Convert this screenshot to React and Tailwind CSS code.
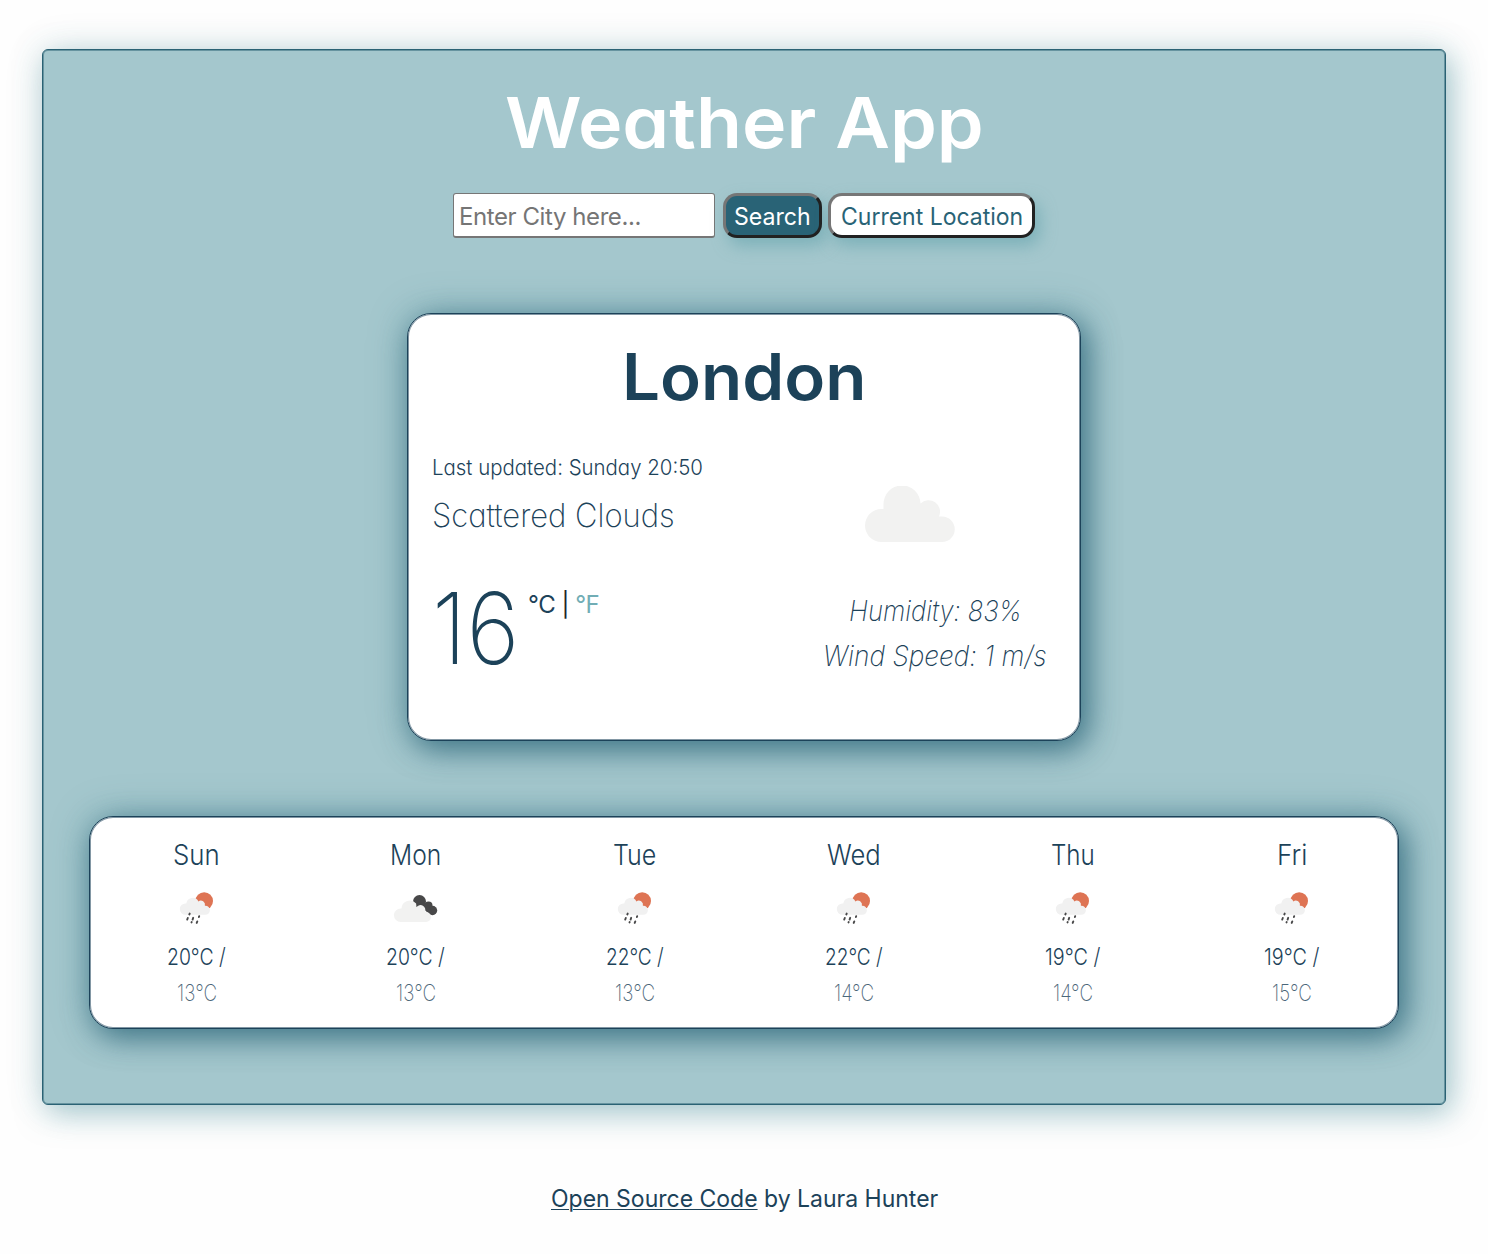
import { useLayoutEffect, useRef, useState } from 'react';

// Condenses or widens a single line of text to a given width.
function Fit({ width, className = '', children }) {
  const ref = useRef(null);
  const [scale, setScale] = useState(1);
  useLayoutEffect(() => {
    setScale(width / ref.current.offsetWidth);
  }, [width]);
  return (
    <span className={`inline-flex whitespace-nowrap ${className}`} style={{ width }}>
      <span ref={ref} className="inline-block shrink-0 origin-left" style={{ transform: `scaleX(${scale})` }}>
        {children}
      </span>
    </span>
  );
}

function Cloud({ className }) {
  return (
    <svg viewBox="0 0 90 56" className={className} fill="#f2f2f1">
      <path d="M16.500 56A16.500 16.500 0 0 1 16.500 23H18.500V18.500A18.500 18.500 0 0 1 55.500 17.500A11.500 11.500 0 0 1 74 30.500H77A12.750 12.750 0 0 1 77 56Z" />
    </svg>
  );
}

function RainIcon() {
  return (
    <svg viewBox="0 0 44 36" className="h-9 w-11">
      <circle cx="29.200" cy="10" r="8.800" fill="#de7454" />
      <path d="M10.500 23.800A5.700 5.700 0 0 1 10.500 12.400H11.300A6.400 6.400 0 0 1 23.400 10.400A4.200 4.200 0 0 1 29.900 14.800H30.400A4.500 4.500 0 0 1 30.400 23.800Z" fill="#f1f1f1" />
      <g stroke="#484849" strokeWidth="1.900" strokeLinecap="round">
        <path d="M14.700 22.600L14.300 23.500M12.800 27L12.200 28.600M18.200 26.800L17.600 28.600M24.200 25.200L23.900 26M16.700 31L16.500 31.400M22.300 30.400L21.700 31.900" />
      </g>
    </svg>
  );
}

function CloudsIcon() {
  return (
    <svg viewBox="0 0 46 36" className="h-9 w-[46px]">
      <g fill="#484849">
        <circle cx="26.500" cy="10.500" r="6.500" />
        <circle cx="35.500" cy="14.500" r="4" />
        <circle cx="39.500" cy="19.500" r="4.700" />
        <path d="M24 12L33 12L40 22L35 22Z" />
      </g>
      <path d="M7.700 31A6.750 6.750 0 0 1 7.700 17.500H8.500A8.300 8.300 0 0 1 23.100 12.500L23.500 16.200A4.800 4.800 0 0 1 31.800 21H33A5 5 0 0 1 33 31Z" fill="#f2f2f1" />
    </svg>
  );
}

const days = [
  { name: 'Sun', w: 47, max: '20°C /', mw: 59, min: '13°C', Icon: RainIcon },
  { name: 'Mon', w: 51, max: '20°C /', mw: 59, min: '13°C', Icon: CloudsIcon },
  { name: 'Tue', w: 43, max: '22°C /', mw: 58, min: '13°C', Icon: RainIcon },
  { name: 'Wed', w: 54, max: '22°C /', mw: 58, min: '14°C', Icon: RainIcon },
  { name: 'Thu', w: 44, max: '19°C /', mw: 55, min: '14°C', Icon: RainIcon },
  { name: 'Fri', w: 30, max: '19°C /', mw: 55, min: '15°C', Icon: RainIcon },
];

export default function App() {
  return (
    <div className="h-[1254px] overflow-hidden bg-[#fefefe] px-[42px] pt-[49px] font-['Inter',sans-serif] text-[#1c4259]">
      <main className="h-[1056px] rounded-md border border-[#2a6274] bg-[#a4c7cd] px-[46px] shadow-[inset_0_0_0_1px_rgba(42,98,116,0.5),0_0_40px_rgba(41,96,115,0.12),5px_8px_30px_rgba(95,160,170,0.5)]">
        <h1 className="flex h-[143px] items-center justify-center pt-0.5 text-[70px] leading-[100px] font-semibold text-white [font-feature-settings:'cv11']">
          <Fit width={479}>Weather App</Fit>
        </h1>

        <form className="flex h-[45px] justify-center text-2xl leading-[30px]">
          <div className="mr-2 flex w-[262px] items-center rounded-[3px] border border-b-2 border-[#767676] bg-white pt-0.5 pl-[5px]">
            <label className="hidden" htmlFor="city">City</label>
            <input id="city" className="h-[38px] w-full bg-white tracking-[-0.42px] outline-none placeholder:text-[#757575]" placeholder="Enter City here..." />
          </div>
          <button type="button" className="mr-1.5 w-[99px] rounded-[14px] border-3 border-t-[#767676] border-r-[#212121] border-b-[#212121] border-l-[#767676] bg-[#296376] pt-0.5 text-white shadow-[5px_8px_16px_rgba(95,160,170,0.55)]">
            <Fit width={77}>Search</Fit>
          </button>
          <button type="button" className="w-[207px] rounded-[14px] border-3 border-t-[#767676] border-r-[#212121] border-b-[#212121] border-l-[#767676] bg-white pt-0.5 text-[#296376] shadow-[5px_8px_16px_rgba(95,160,170,0.55)]">
            <Fit width={182}>Current Location</Fit>
          </button>
        </form>

        <section className="mx-auto mt-[75px] h-[428px] w-[674px] rounded-[24px] border border-[#1c4259] bg-white pr-[33px] pl-6 shadow-[inset_0_0_0_1px_rgba(28,66,89,0.55),0_0_38px_rgba(60,125,140,0.35),6px_8px_30px_rgba(32,88,110,0.75)]">
          <h2 className="flex h-[126px] items-center justify-center pl-2 text-[64px] leading-[80px] font-semibold [font-feature-settings:'cv11']">
            <Fit width={244}>London</Fit>
          </h2>
          <div className="flex justify-between [font-feature-settings:'cv11']">
            <div>
              <p className="flex h-[54px] items-center text-[22px] font-light"><Fit width={271}>Last updated: Sunday 20:50</Fit></p>
              <p className="flex h-[42px] items-center text-[33px] leading-[46px] font-extralight"><Fit width={243}>Scattered Clouds</Fit></p>
              <div className="mt-[42px] flex items-start">
                <strong className="text-[99px] leading-[100px] font-extralight"><Fit width={87}>16</Fit></strong>
                <span className="mt-[11px] ml-[9px] text-2xl leading-[32px] tracking-[-0.5px]">
                  °C <span className="text-[#212529]">|</span> <span className="text-[#71adb5]">°F</span>
                </span>
              </div>
            </div>
            <div className="flex flex-col items-end pt-[46px]">
              <Cloud className="mr-[92px] h-[56px] w-[90px]" />
              <div className="mt-[47px] flex w-[224px] flex-col items-center text-[28px] leading-[45px] font-extralight italic">
                <Fit width={173}>Humidity: 83%</Fit>
                <Fit width={224}>Wind Speed: 1 m/s</Fit>
              </div>
            </div>
          </div>
        </section>

        <section className="mt-[75px] h-[213px] rounded-[24px] border border-[#1c4259] bg-white shadow-[inset_0_0_0_1px_rgba(28,66,89,0.55),0_0_38px_rgba(60,125,140,0.35),6px_8px_30px_rgba(32,88,110,0.75)]">
          <div className="-mx-[3px] grid grid-cols-6">
            {days.map(({ name, w, max, mw, min, Icon }) => (
              <div key={name} className="flex flex-col items-center pt-5 font-light [font-feature-settings:'cv11']">
                <Fit width={w} className="text-[28px] leading-[36px]">{name}</Fit>
                <div className="mt-[18px]"><Icon /></div>
                <Fit width={mw} className="mt-3 text-[23px] leading-[36px]">{max}</Fit>
                <Fit width={40} className="text-[23px] leading-[36px] font-extralight opacity-80">{min}</Fit>
              </div>
            ))}
          </div>
        </section>
      </main>

      <footer className="flex justify-center pt-[76px] text-2xl leading-[36px]">
        <Fit width={387}><a href="#" className="underline decoration-1 underline-offset-2">Open Source Code</a> by Laura Hunter</Fit>
      </footer>
    </div>
  );
}
